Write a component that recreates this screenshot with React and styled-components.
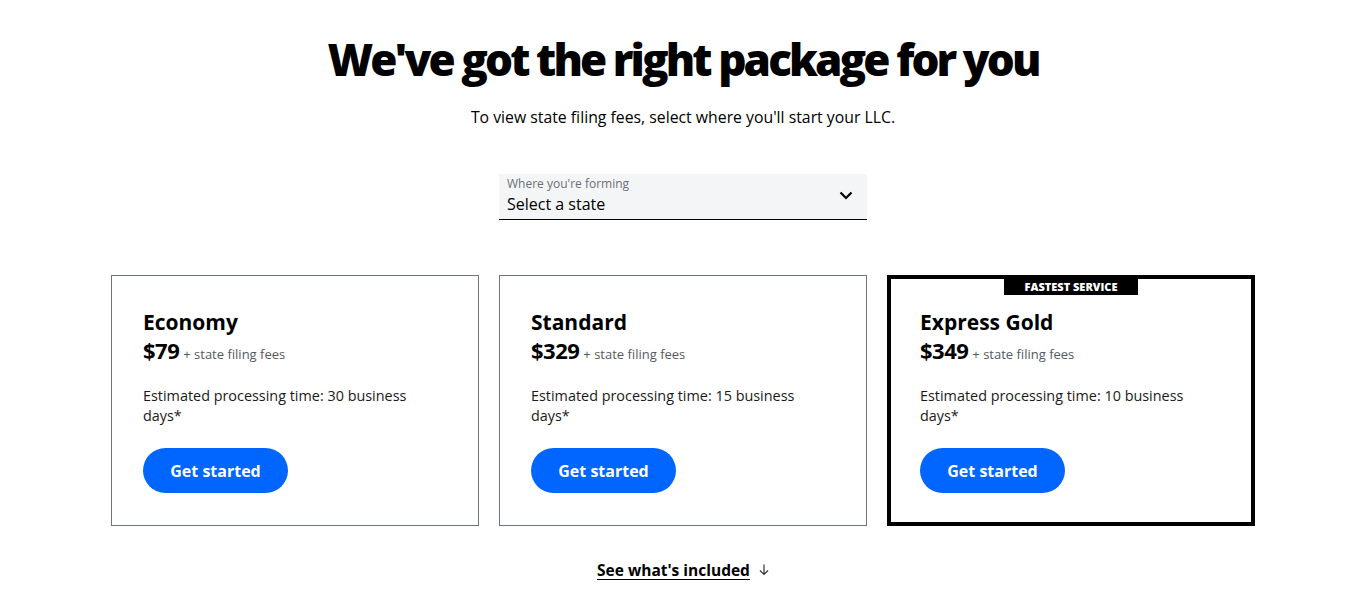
import styled, { createGlobalStyle } from 'styled-components';

const GlobalStyle = createGlobalStyle`
  body {
    margin: 0;
    background: #fff;
    font-family: "Open Sans", "Liberation Sans", sans-serif;
    color: #000;
  }
`;

const Page = styled.main`
  display: flex;
  flex-direction: column;
  align-items: center;
  padding-top: 29px;
`;

const Title = styled.h1`
  margin: 0;
  font-size: 44px;
  font-weight: 800;
  letter-spacing: -2.9px;
  line-height: 60px;
`;

const Subtitle = styled.p`
  margin: 17px 0 0;
  font-size: 15.8px;
  line-height: 22px;
`;

const Select = styled.div`
  margin-top: 46px;
  width: 368px;
  height: 46px;
  box-sizing: border-box;
  background: #f4f5f7;
  border-bottom: 1px solid #000;
  padding: 0 14px 2px 8px;
  display: flex;
  align-items: center;
  justify-content: space-between;
`;

const SelectText = styled.div`
  display: flex;
  flex-direction: column;
`;

const SelectLabel = styled.span`
  font-size: 12px;
  line-height: 16px;
  color: #6b6f76;
`;

const SelectValue = styled.span`
  font-size: 16px;
  line-height: 24px;
`;

const Cards = styled.div`
  margin-top: 55px;
  display: grid;
  grid-template-columns: repeat(3, 368px);
  gap: 20px;
`;

const Card = styled.section`
  position: relative;
  box-sizing: border-box;
  height: 251px;
  border: ${(p) => (p.$featured ? '4px solid #000' : '1px solid #70757d')};
  padding: ${(p) => (p.$featured ? '29px 29px' : '32px 31px')};
`;

const Badge = styled.span`
  position: absolute;
  top: 0;
  left: 50%;
  transform: translateX(-50%);
  width: 134px;
  height: 16px;
  background: #000;
  color: #fff;
  font-size: 11px;
  font-weight: 800;
  line-height: 16px;
  text-align: center;
`;

const PlanName = styled.h2`
  margin: 0;
  font-size: 21px;
  font-weight: 700;
  line-height: 28px;
`;

const PriceRow = styled.div`
  display: flex;
  align-items: baseline;
  gap: 4px;
  height: 28px;
`;

const Price = styled.span`
  font-size: 22px;
  font-weight: 700;
  line-height: 28px;
  letter-spacing: -0.5px;
`;

const Fees = styled.span`
  font-size: 13px;
  color: #555a61;
`;

const Processing = styled.p`
  margin: 22px 0 0;
  width: 285px;
  font-size: 14.4px;
  line-height: 20px;
  color: #1a1a1a;
`;

const Button = styled.button`
  margin-top: 22px;
  width: 145px;
  height: 45px;
  border: none;
  border-radius: 23px;
  background: #0066ff;
  color: #fff;
  font-family: inherit;
  font-size: 16px;
  font-weight: 700;
  cursor: pointer;
`;

const Included = styled.a`
  margin-top: 33px;
  display: flex;
  align-items: center;
  gap: 9px;
  color: #000;
  font-size: 15.5px;
  font-weight: 700;
  text-decoration: none;
`;

const IncludedText = styled.span`
  text-decoration: underline;
  text-underline-offset: 3px;
`;

const plans = [
  { name: 'Economy', price: '$79', days: 30 },
  { name: 'Standard', price: '$329', days: 15 },
  { name: 'Express Gold', price: '$349', days: 10, featured: true },
];

export default function App() {
  return (
    <>
      <GlobalStyle />
      <Page>
        <Title>We've got the right package for you</Title>
        <Subtitle>To view state filing fees, select where you'll start your LLC.</Subtitle>
        <Select>
          <SelectText>
            <SelectLabel>Where you're forming</SelectLabel>
            <SelectValue>Select a state</SelectValue>
          </SelectText>
          <svg width="14" height="9" viewBox="0 0 14 9" fill="none">
            <path d="M1.5 1.5L7 7l5.5-5.5" stroke="#000" strokeWidth="2.2" />
          </svg>
        </Select>
        <Cards>
          {plans.map((plan) => (
            <Card key={plan.name} $featured={plan.featured}>
              {plan.featured && <Badge>FASTEST SERVICE</Badge>}
              <PlanName>{plan.name}</PlanName>
              <PriceRow>
                <Price>{plan.price}</Price>
                <Fees>+ state filing fees</Fees>
              </PriceRow>
              <Processing>
                Estimated processing time: {plan.days} business days*
              </Processing>
              <Button>Get started</Button>
            </Card>
          ))}
        </Cards>
        <Included href="#">
          <IncludedText>See what's included</IncludedText>
          <svg width="10" height="12" viewBox="0 0 10 12" fill="none">
            <path d="M5 0.5v10M1 6.5l4 4 4-4" stroke="#333" strokeWidth="1.2" />
          </svg>
        </Included>
      </Page>
    </>
  );
}
